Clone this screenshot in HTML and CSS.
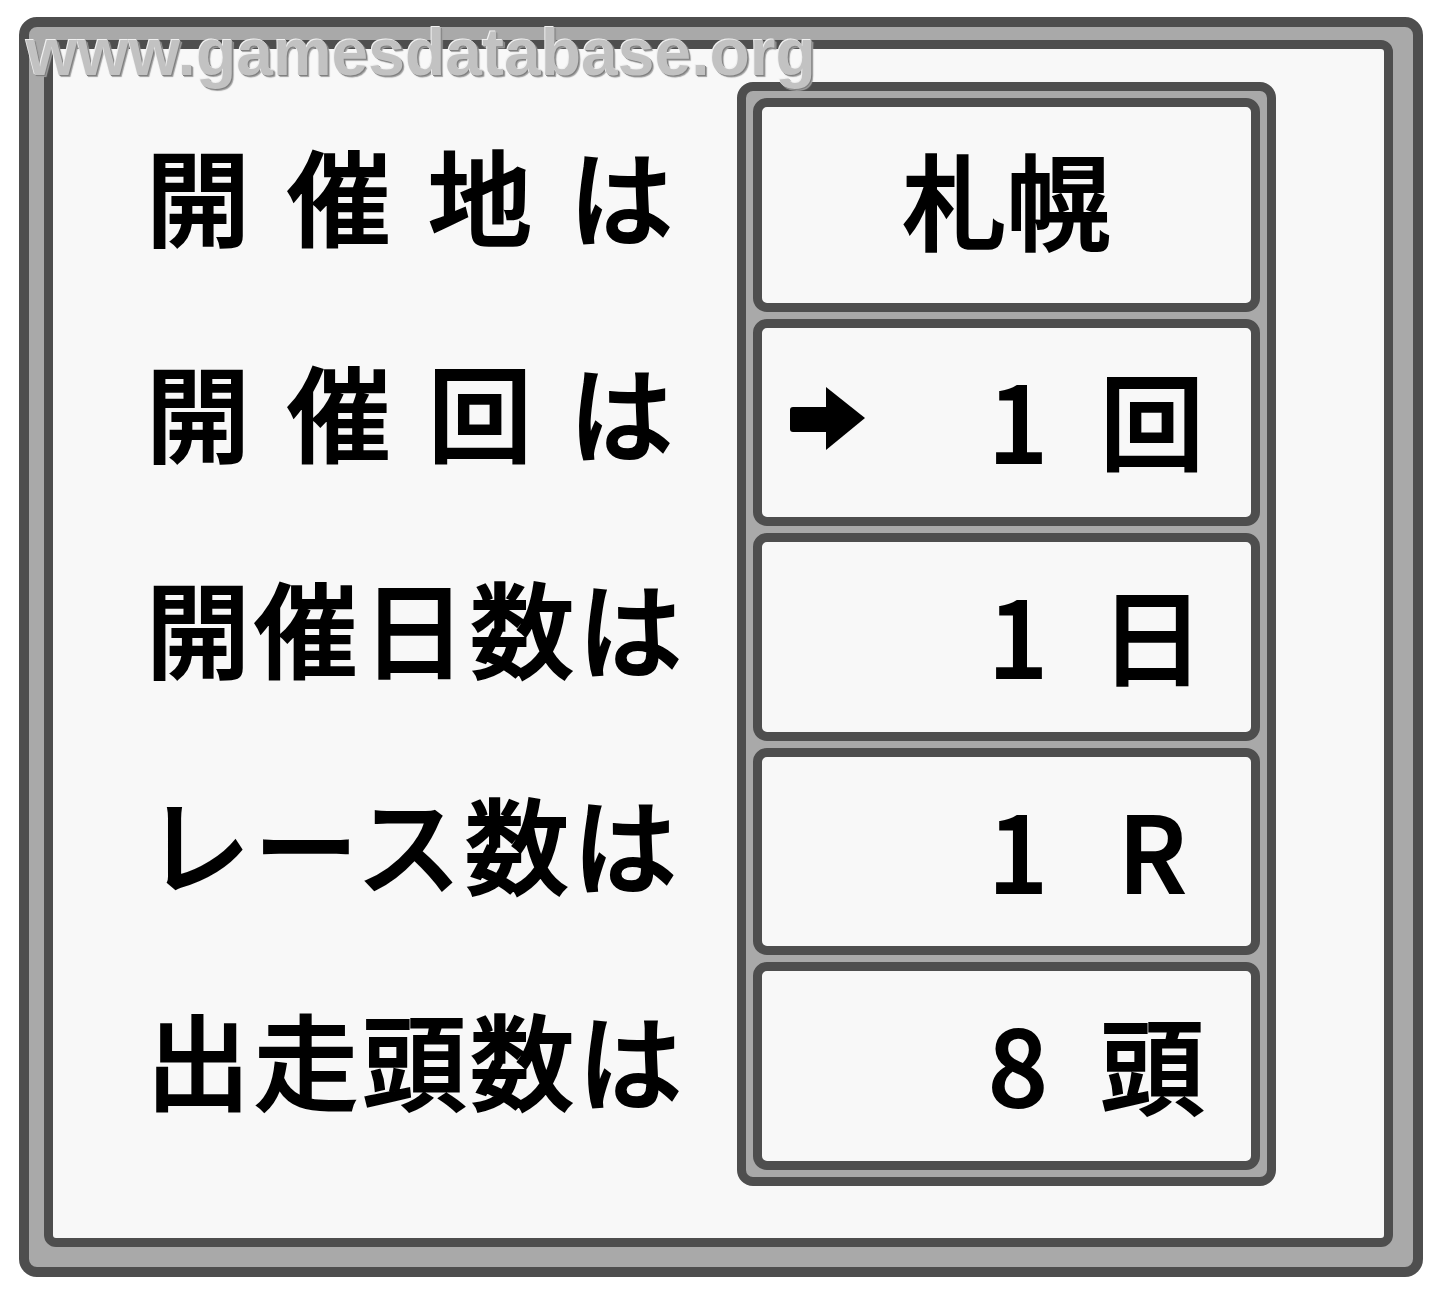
FILE: index.html
```html
<!DOCTYPE html>
<html lang="ja">
<head>
    <meta charset="UTF-8">
    <title>開催設定</title>
    <link rel="stylesheet" href="styles.css">
</head>
<body>
    <div class="screen">
        <div class="watermark">www.gamesdatabase.org</div>

        <div class="frame">
            <div class="panel">
                <div class="labels">
                    <div class="label wide">開催地は</div>
                    <div class="label wide">開催回は</div>
                    <div class="label">開催日数は</div>
                    <div class="label">レース数は</div>
                    <div class="label">出走頭数は</div>
                </div>

                <div class="group">
                    <div class="cell center">札幌</div>
                    <div class="cell">
                        <svg class="arrow" viewBox="0 0 75 63">
                            <rect x="0" y="20" width="42" height="25" rx="3"/>
                            <polygon points="36,0 75,31 36,63"/>
                        </svg>
                        <span class="num">1</span>
                        <span class="unit">回</span>
                    </div>
                    <div class="cell">
                        <span class="num">1</span>
                        <span class="unit">日</span>
                    </div>
                    <div class="cell">
                        <span class="num">1</span>
                        <span class="unit">R</span>
                    </div>
                    <div class="cell">
                        <span class="num">8</span>
                        <span class="unit">頭</span>
                    </div>
                </div>
            </div>
        </div>
    </div>
</body>
</html>
```

FILE: styles.css
```css
* {
    box-sizing: border-box;
}
body {
    margin: 0;
    background-color: #ffffff;
    font-family: "Noto Sans CJK JP", sans-serif;
    color: #000000;
}
.screen {
    position: relative;
    width: 1440px;
    height: 1294px;
    padding: 17px 0 0 19px;
}
.watermark {
    position: absolute;
    left: 26px;
    top: 14px;
    font-family: "Liberation Sans", Arial, sans-serif;
    font-weight: bold;
    font-size: 66px;
    color: #c2c2c2;
    text-shadow: -1px -1px 0 #f0f0f0, 1px 1px 0 #808080, 2px 2px 1px #a0a0a0;
    z-index: 2;
}
.frame {
    width: 1404px;
    height: 1260px;
    border: 10px solid #4e4e4e;
    border-radius: 18px;
    background-color: #a9a9a9;
    padding: 13px 20px 20px 15px;
}
.panel {
    height: 100%;
    border: 9px solid #4e4e4e;
    border-radius: 12px;
    background-color: #f8f8f8;
    padding: 33px 108px 52px 93px;
    display: flex;
}
.labels {
    width: 591px;
    display: flex;
    flex-direction: column;
    gap: 7px;
    padding: 16px 0;
}
.label {
    flex: 1;
    display: flex;
    align-items: center;
    font-size: 104px;
    font-weight: 500;
    -webkit-text-stroke: 2px #000000;
    letter-spacing: 4px;
    line-height: 1;
    padding-bottom: 16px;
}
.label.wide {
    letter-spacing: 37px;
}
.group {
    width: 539px;
    display: flex;
    flex-direction: column;
    gap: 7px;
    border: 9px solid #4e4e4e;
    border-radius: 16px;
    background-color: #a9a9a9;
    padding: 7px;
}
.cell {
    flex: 1;
    display: flex;
    align-items: center;
    justify-content: flex-end;
    border: 9px solid #4e4e4e;
    border-radius: 14px;
    background-color: #f8f8f8;
    padding: 0 45px 8px 28px;
    font-size: 104px;
    font-weight: 500;
    -webkit-text-stroke: 2px #000000;
    line-height: 1;
}
.cell.center {
    justify-content: center;
    padding: 0 0 14px 0;
}
.arrow {
    width: 75px;
    height: 63px;
    fill: #000000;
    margin-right: auto;
}
.num {
    width: 108px;
    text-align: center;
}
.unit {
    width: 108px;
    margin-left: 26px;
    text-align: center;
}
```
